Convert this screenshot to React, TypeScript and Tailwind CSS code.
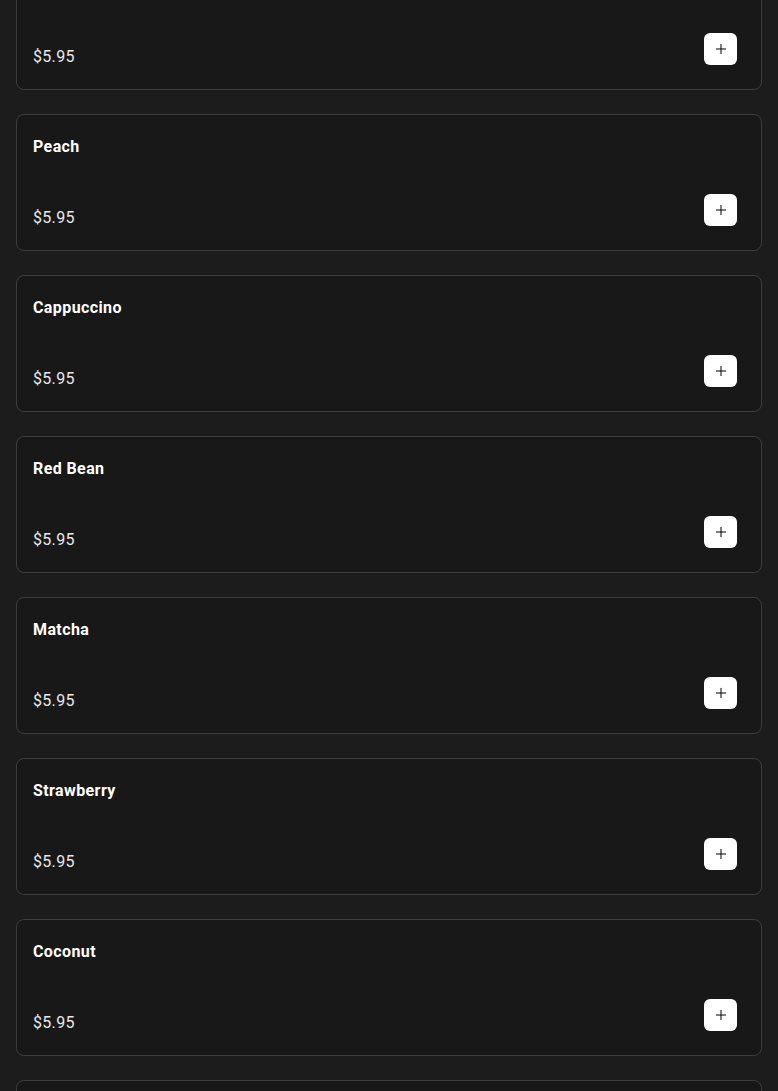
import { Plus } from "lucide-react";

const items = [
  "Taro",
  "Peach",
  "Cappuccino",
  "Red Bean",
  "Matcha",
  "Strawberry",
  "Coconut",
  "Mango",
];

function ItemCard({ name }: { name: string }) {
  return (
    <div className="rounded-lg border border-[#3d3d3d] bg-[#181818] pl-4 pr-6 pt-5 pb-5">
      <p className="text-base font-bold leading-6 tracking-wide text-white">{name}</p>
      <div className="mt-[35px] flex items-end justify-between">
        <span className="text-base leading-6 tracking-[0.02em] text-[#e8e8e8]">$5.95</span>
        <button className="mb-1 flex h-8 w-[33px] items-center justify-center rounded-md bg-white text-black">
          <Plus className="h-4 w-4" strokeWidth={1.5} />
        </button>
      </div>
    </div>
  );
}

export default function App() {
  return (
    <div
      className="h-[1091px] overflow-hidden bg-[#1c1c1c]"
      style={{ fontFamily: "Roboto, 'Liberation Sans', sans-serif" }}
    >
      <div className="-mt-[47px] flex flex-col gap-6 px-4">
        {items.map((name) => (
          <ItemCard key={name} name={name} />
        ))}
      </div>
    </div>
  );
}
